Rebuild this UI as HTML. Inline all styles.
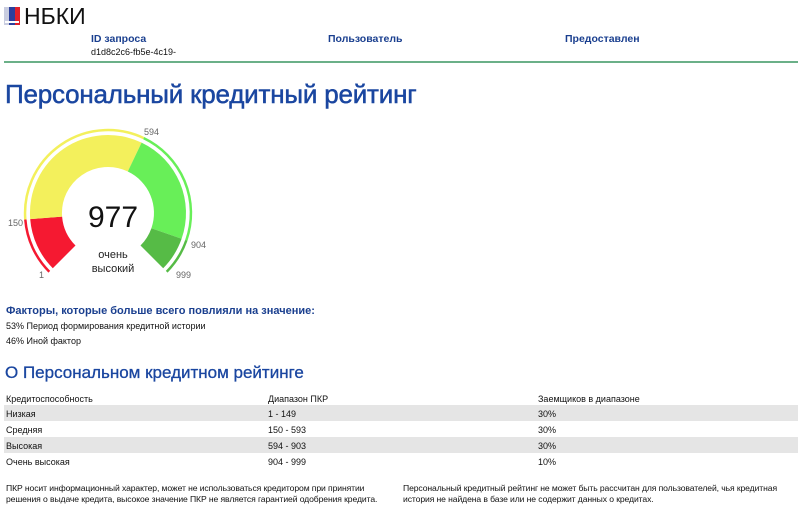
<!DOCTYPE html>
<html><head><meta charset="utf-8"><style>
body{margin:0;width:800px;height:509px;background:#fff;font-family:"Liberation Sans",Arial,sans-serif;position:relative;overflow:hidden;color:#111}
.a{position:absolute;white-space:nowrap}
.h{color:#1a3f8f;font-weight:bold;font-size:10.5px}
.s{font-size:9px}
.row{position:absolute;left:4px;width:794px;height:16px;font-size:9px}
.row span{position:absolute;top:4px}
.g{background:#e5e5e5}
</style></head><body>
<svg class="a" style="left:4px;top:7px" width="16" height="18"><rect x="0" y="0" width="5" height="18" fill="#c9cde0"/><rect x="5" y="0" width="6" height="18" fill="#2b3f9c"/><rect x="11" y="0" width="5" height="18" fill="#e0202a"/><rect x="1" y="14" width="14" height="2" fill="#fff"/></svg>
<div class="a" style="left:24px;top:3px;font-size:23px">НБКИ</div>
<div class="a h" style="left:91px;top:33px">ID запроса</div>
<div class="a s" style="left:91px;top:47px">d1d8c2c6-fb5e-4c19-</div>
<div class="a h" style="left:328px;top:33px">Пользователь</div>
<div class="a h" style="left:565px;top:33px">Предоставлен</div>
<div class="a" style="left:4px;top:61px;width:794px;height:2px;background:#6bb088"></div>
<div class="a" style="left:5px;top:79px;font-size:26px;color:#1a46a0;letter-spacing:-0.2px;-webkit-text-stroke:0.5px #1a46a0">Персональный кредитный рейтинг</div>
<svg class="a" style="left:0;top:115px" width="220" height="175" viewBox="0 115 220 175">
<path d="M52.8 268.2 A78 78 0 0 1 30.2 219.1 L62.1 216.6 A46 46 0 0 0 75.5 245.5Z" fill="#f51931"/>
<path d="M30.2 219.1 A78 78 0 0 1 141.6 142.6 L127.8 171.5 A46 46 0 0 0 62.1 216.6Z" fill="#f3f05c"/>
<path d="M141.6 142.6 A78 78 0 0 1 181.6 238.8 L151.4 228.2 A46 46 0 0 0 127.8 171.5Z" fill="#68ef58"/>
<path d="M181.6 238.8 A78 78 0 0 1 163.2 268.2 L140.5 245.5 A46 46 0 0 0 151.4 228.2Z" fill="#56bb46"/>
<path d="M49.3 271.7 A83 83 0 0 1 25.3 219.5" stroke="#f51931" stroke-width="2.5" fill="none"/>
<path d="M25.3 219.5 A83 83 0 0 1 143.7 138.1" stroke="#f3f05c" stroke-width="2.5" fill="none"/>
<path d="M143.7 138.1 A83 83 0 0 1 186.3 240.4" stroke="#68ef58" stroke-width="2.5" fill="none"/>
<path d="M186.3 240.4 A83 83 0 0 1 166.7 271.7" stroke="#56bb46" stroke-width="2.5" fill="none"/>
<g font-size="9" fill="#666"><text x="144" y="135">594</text><text x="8" y="226">150</text><text x="191" y="248">904</text><text x="176" y="278">999</text><text x="39" y="278">1</text></g>
<text x="113" y="227" font-size="30" text-anchor="middle" fill="#111">977</text>
<text x="113" y="258" font-size="11" text-anchor="middle" fill="#222">очень</text>
<text x="113" y="272" font-size="11" text-anchor="middle" fill="#222">высокий</text>
</svg>
<div class="a h" style="left:6px;top:305px;font-size:11px">Факторы, которые больше всего повлияли на значение:</div>
<div class="a s" style="left:6px;top:321px">53% Период формирования кредитной истории</div>
<div class="a s" style="left:6px;top:336px">46% Иной фактор</div>
<div class="a" style="left:5px;top:363px;font-size:17px;color:#1a46a0;-webkit-text-stroke:0.3px #1a46a0">О Персональном кредитном рейтинге</div>
<div class="row" style="top:390px"><span style="left:2px">Кредитоспособность</span><span style="left:264px">Диапазон ПКР</span><span style="left:534px">Заемщиков в диапазоне</span></div>
<div class="row g" style="top:405px"><span style="left:2px">Низкая</span><span style="left:264px">1 - 149</span><span style="left:534px">30%</span></div>
<div class="row" style="top:421px"><span style="left:2px">Средняя</span><span style="left:264px">150 - 593</span><span style="left:534px">30%</span></div>
<div class="row g" style="top:437px"><span style="left:2px">Высокая</span><span style="left:264px">594 - 903</span><span style="left:534px">30%</span></div>
<div class="row" style="top:453px"><span style="left:2px">Очень высокая</span><span style="left:264px">904 - 999</span><span style="left:534px">10%</span></div>
<div class="a" style="left:6px;top:483px;line-height:11px;font-size:8.6px;letter-spacing:-0.1px">ПКР носит информационный характер, может не использоваться кредитором при принятии<br>решения о выдаче кредита, высокое значение ПКР не является гарантией одобрения кредита.</div>
<div class="a" style="left:403px;top:483px;line-height:11px;font-size:8.6px;letter-spacing:-0.1px">Персональный кредитный рейтинг не может быть рассчитан для пользователей, чья кредитная<br>история не найдена в базе или не содержит данных о кредитах.</div>
</body></html>
